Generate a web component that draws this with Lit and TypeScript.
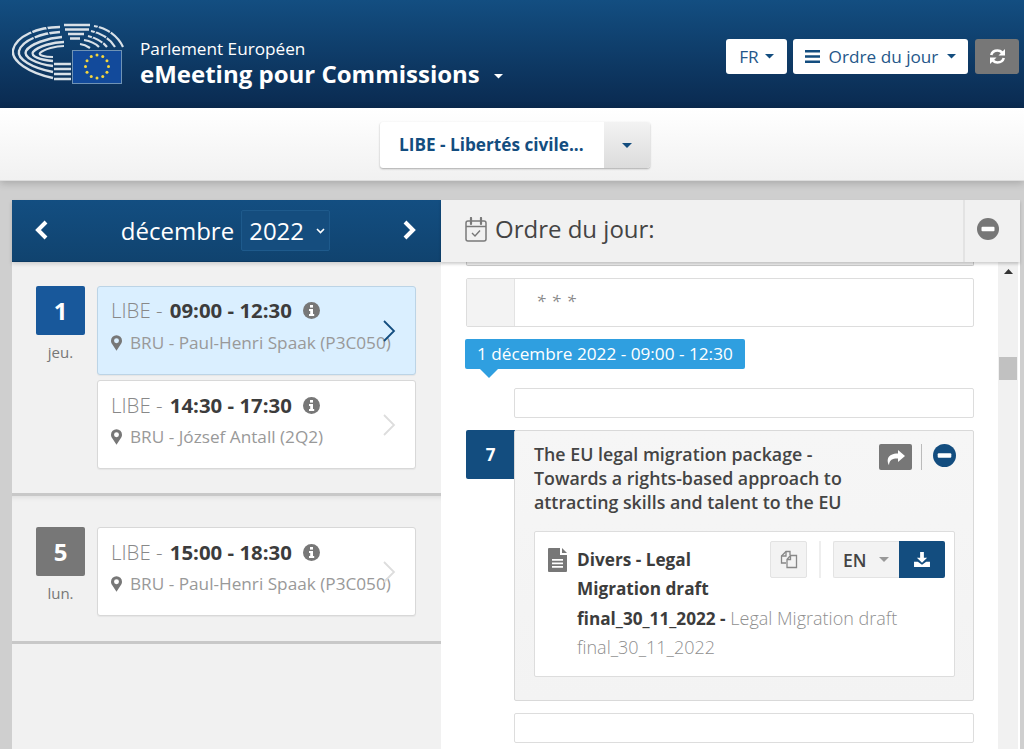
import { LitElement, html, css, svg } from "lit";
import { customElement } from "lit/decorators.js";

const caret = (c: string, w = 10) => html`<svg width=${w} height=${w / 2} viewBox="0 0 10 5"><path d="M0 0h10L5 5z" fill=${c}/></svg>`;
const info = html`<svg width="17" height="17" viewBox="0 0 17 17"><circle cx="8.5" cy="8.5" r="8.5" fill="#777"/><rect x="7" y="3" width="3" height="2.6" fill="#fff"/><path d="M6 7h4v5h1.2v2H6v-2h1.2V9H6z" fill="#fff"/></svg>`;
const pin = html`<svg width="11" height="16" viewBox="0 0 12 17"><path fill-rule="evenodd" d="M6 0a6 6 0 0 0-6 6c0 1.6.5 2.4 1 3.4L6 17l5-7.6c.5-1 1-1.8 1-3.4a6 6 0 0 0-6-6zm0 8.7a2.7 2.7 0 1 1 0-5.4 2.7 2.7 0 0 1 0 5.4z" fill="#777"/></svg>`;
const chev = (c: string) => html`<svg class="chev" width="14" height="22" viewBox="0 0 14 22"><path d="M2 1l10 10L2 21" fill="none" stroke=${c} stroke-width="1.8"/></svg>`;
const bold = (d: string) => html`<svg class="arrow" width="15" height="20" viewBox="0 0 15 20"><path d=${d} fill="none" stroke="#fff" stroke-width="4"/></svg>`;
const minus = (c: string, s: number) => html`<svg width=${s} height=${s} viewBox="0 0 22 22"><circle cx="11" cy="11" r="11" fill=${c}/><rect x="4.5" y="8.8" width="13" height="4.4" rx="1" fill="#fff"/></svg>`;

const stars = [0,1,2,3,4,5,6,7,8,9,10,11].map((i) => {
  const a = (i * Math.PI) / 6;
  return svg`<circle cx=${25 + 11.5 * Math.sin(a)} cy=${16.5 - 11.5 * Math.cos(a)} r="1.5" fill="#f5d63d"/>`;
});

const logo = html`<svg width="112" height="64" viewBox="0 0 112 64">
  <g fill="none" stroke="#d9e1e8" stroke-linecap="butt">
    <path d="M48 5C26 5 4 14 1 28c-2 11 16 23 40 28" stroke-width="2.4"/>
    <path d="M48 10C30 11 10 18 7 29c-2 8 13 17 34 21" stroke-width="2.4"/>
    <path d="M50 15C36 16 18 22 14 29c-3 6 10 13 27 15" stroke-width="2.4"/>
    <path d="M52 20C42 20 26 24 21 30c-3 4 7 8 20 9" stroke-width="2.4"/>
    <path d="M52 24C44 24 32 27 28 31c-2 2 4 4 13 4" stroke-width="2"/>
    <path d="M52 3h26M53 7.500h24M56 12h16M58 16.500h10" stroke-width="2.400"/>
    <path d="M82 4c13 2 24 10 29 21M79 9c10 2 19 8 24 16M76 14c8 2 15 6 19 11M72 18c6 1 12 4 15 7M68 22c4 .5 7 2 10 4" stroke-width="2.200"/>
    <path d="M42 42h17M42 47h17M42 52h17M42 57h17" stroke-width="2.600"/>
    <path d="M18 6l6 14M34 3l4 12M88 2l-8 14M100 8l-10 14" stroke="#0f3f6e" stroke-width="1.200"/>
  </g>
  <g transform="translate(60 28)">
    <rect x=".5" y=".5" width="49" height="33" fill="#124a9b" stroke="#6f93b5"/>
    ${stars}
  </g>
</svg>`;

@customElement("app-root")
export class AppRoot extends LitElement {
  static styles = css`
    :host { display: block; height: 749px; overflow: hidden; background: #cfcfcf; font-family: "Open Sans", sans-serif; color: #444; }
    * { box-sizing: border-box; }
    .top { height: 108px; display: flex; background: linear-gradient(#134e81, #0a2a50); padding: 22px 5px 0 12px; }
    .brand { display: flex; flex: 1; }
    .brand-text { margin: 15px 0 0 16px; color: #fff; }
    .brand-1 { font-size: 17.200px; line-height: 23px; }
    .brand-2 { font-size: 24px; line-height: 28px; font-weight: 700; display: flex; align-items: center; gap: 14px; }
    .brand-2 svg { margin-top: 5px; }
    .tools { display: flex; gap: 6px; height: 35px; margin-top: 17px; }
    .tool { background: #fff; border-radius: 3px; color: #25578a; font-size: 17.200px; display: flex; align-items: center; justify-content: center; gap: 6px; }
    .fr { width: 61px; }
    .menu { width: 175px; gap: 9px; }
    .sync { width: 44px; background: #777; margin-left: 1px; }
    .sub { height: 73px; background: linear-gradient(#fff, #f1f1f1); border-bottom: 1px solid #ddd; box-shadow: 0 2px 8px rgba(0,0,0,.2); display: flex; justify-content: center; padding-top: 14px; position: relative; }
    .pick { width: 270px; height: 46px; display: flex; border-radius: 3px; background: #fff; box-shadow: 0 1px 2px rgba(0,0,0,.3); margin-left: 6px; }
    .pick-t { flex: 1; font-size: 17.200px; font-weight: 700; color: #134d7f; padding: 0 0 0 19px; line-height: 46px; white-space: nowrap; }
    .pick-c { width: 46px; background: linear-gradient(#f3f3f3, #dcdcdc); display: flex; align-items: center; justify-content: center; border-radius: 0 3px 3px 0; }
    .main { display: flex; margin: 19px 4px 0 12px; height: 549px; }
    .left { width: 429px; background: #f1f1f1; }
    .lhead { height: 62px; background: linear-gradient(#134e81, #10436f); border-bottom: 1px solid #0c3a62; box-shadow: 0 2px 4px rgba(0,0,0,.15); color: #fff; display: flex; align-items: center; padding: 0 24px 0 22px; position: relative; }
    .arrow { margin-top: -2px; }
    .month { flex: 1; display: flex; align-items: center; justify-content: center; font-size: 24px; gap: 7px; }
    .year { width: 89px; height: 41px; border: 1px solid #1e5a8c; border-radius: 2px; background: #154d7e; display: flex; align-items: center; gap: 12px; padding-left: 7px; }
    .group { border-bottom: 3px solid #c8c8c8; padding: 24px 25px 0 24px; display: flex; gap: 12px; }
    .g1 { height: 234px; }
    .g2 { height: 148px; padding-top: 31px; box-shadow: inset 0 6px 6px -6px rgba(0,0,0,.12); }
    .day { width: 49px; text-align: center; color: #777; font-size: 15px; }
    .num { height: 49px; border-radius: 2px; color: #fff; font-size: 24px; font-weight: 700; display: flex; align-items: center; justify-content: center; margin-bottom: 7px; }
    .blue { background: #18589b; }
    .gray { background: #777; }
    .sess { flex: 1; display: flex; flex-direction: column; gap: 5px; }
    .card { height: 89px; background: #fff; border: 1px solid #d8d8d8; border-radius: 3px; padding: 9px 0 0 13px; position: relative; white-space: nowrap; box-shadow: 0 1px 1px rgba(0,0,0,.05); }
    .card.on { background: #daefff; border-color: #bcd4e6; padding-top: 8px; }
    .l1 { font-size: 20.400px; line-height: 30px; color: #888; display: flex; align-items: center; font-weight: 300; white-space: pre; }
    .l1 b { font-weight: 700; color: #3c3c3c; margin: 0 11px 0 2px; }
    .l2 { font-size: 17.200px; line-height: 24px; margin-top: 5px; color: #999; display: flex; align-items: center; gap: 8px; }
    .on .l2 { margin-top: 6px; }
    .chev { position: absolute; right: 19px; top: 33px; }
    .right { flex: 1; background: #fff; display: flex; flex-direction: column; }
    .rhead { height: 62px; background: #f1f1f1; display: flex; align-items: center; font-size: 24px; color: #444; box-shadow: 0 2px 3px rgba(0,0,0,.2); position: relative; }
    .rtitle { flex: 1; display: flex; align-items: center; gap: 8px; padding-left: 24px; line-height: 58px; height: 100%; padding-bottom: 4px; }
    .coll { width: 57px; height: 100%; border-left: 2px solid #e3e3e3; display: flex; align-items: center; justify-content: center; padding: 0 10px 4px 0; }
    .rbody { flex: 1; display: flex; overflow: hidden; }
    .list { flex: 1; padding: 0 24px 0 25px; }
    .clip { height: 4px; border: 1px solid #ccc; border-top: 0; border-radius: 0 0 2px 2px; background: #f1f1f1; margin-bottom: 12px; }
    .row { display: flex; height: 49px; border: 1px solid #ddd; border-radius: 2px; background: #fff; }
    .row-n { width: 48px; background: #f3f3f3; border-right: 1px solid #e3e3e3; }
    .row-t { padding: 10px 0 0 21px; color: #888; font-style: italic; font-size: 17.200px; letter-spacing: .6px; }
    .tag { display: inline-block; margin: 12px 0 0 -1px; height: 30px; background: #2f9fe0; border-radius: 2px; color: #fff; font-size: 17.200px; line-height: 30px; padding: 0 12px; position: relative; }
    .tag::after { content: ""; position: absolute; left: 15px; top: 30px; border: 9px solid transparent; border-top-color: #2f9fe0; border-bottom: 0; }
    .blank { height: 30px; border: 1px solid #ddd; border-radius: 2px; margin: 19px 0 0 48px; background: #fff; }
    .blank.after { margin-top: 12px; }
    .item { display: flex; margin-top: 12px; }
    .inum { width: 49px; height: 49px; background: #134d7f; color: #fff; font-weight: 700; font-size: 17px; border-radius: 2px 0 0 2px; display: flex; align-items: center; justify-content: center; margin-right: -1px; }
    .ibody { flex: 1; height: 271px; background: linear-gradient(#f6f6f6, #f3f3f3); border: 1px solid #d9d9d9; border-radius: 2px; padding: 11px 18px 0 19px; }
    .ititle-row { display: flex; height: 89px; justify-content: space-between; }
    .ititle { width: 330px; font-size: 17.800px; font-weight: 600; line-height: 24px; color: #444; }
    .iact { display: flex; align-items: flex-start; padding-top: 2px; margin-right: -1px; }
    .share { width: 33px; height: 26px; background: #777; border-radius: 2px; display: flex; align-items: center; justify-content: center; }
    .sep { width: 1px; height: 26px; background: #bbb; margin: 0 11px 0 9px; }
    .doc { height: 146px; background: #fff; border: 1px solid #ddd; border-radius: 2px; padding: 9px 9px 0 13px; display: flex; }
    .dicon { width: 29px; flex: none; padding-top: 7px; }
    .dtext { flex: 1; font-size: 18px; line-height: 29.300px; color: #8f8f8f; font-weight: 300; margin-top: 4px; margin-right: -200px; position: relative; }
    .dtext b { font-weight: 700; color: #3c3c3c; font-size: 17.200px; }
    .dname { width: 170px; font-weight: 700; color: #3c3c3c; font-size: 17.200px; }
    .dacts { display: flex; height: 37px; position: relative; }
    .copy { width: 37px; background: #f3f3f3; border: 1px solid #e3e3e3; border-radius: 2px; display: flex; align-items: center; justify-content: center; }
    .dsep { width: 2px; background: #eee; margin: 0 12px; }
    .lang { width: 66px; background: #f3f3f3; border: 1px solid #e3e3e3; border-right: 0; border-radius: 2px 0 0 2px; font-size: 17.500px; font-weight: 600; color: #444; display: flex; align-items: center; gap: 13px; padding-left: 9px; }
    .dl { width: 46px; background: #134d7f; border-radius: 0 2px 2px 0; display: flex; align-items: center; justify-content: center; }
    .bar { width: 22px; background: #f1f1f1; display: flex; flex-direction: column; align-items: center; padding-right: 2px; background-clip: content-box; }
    .bar svg { margin-top: 7px; }
    .thumb { width: 18px; height: 23px; background: #c1c1c1; margin-top: 83px; }
  `;

  private session(time: string, room: string, on: boolean) {
    return html`<div class="card ${on ? "on" : ""}">
      <div class="l1">LIBE - <b>${time}</b>${info}</div>
      <div class="l2">${pin}<span>${room}</span></div>
      ${chev(on ? "#134d7f" : "#ddd")}
    </div>`;
  }

  render() {
    return html`
      <div class="top">
        <div class="brand">
          ${logo}
          <div class="brand-text">
            <div class="brand-1">Parlement Européen</div>
            <div class="brand-2">eMeeting pour Commissions ${caret("#fff", 9)}</div>
          </div>
        </div>
        <div class="tools">
          <div class="tool fr">FR ${caret("#134d7f", 9)}</div>
          <div class="tool menu">
            <svg width="15" height="13" viewBox="0 0 15 13"><path d="M0 0h15v2.6H0zM0 5.2h15v2.6H0zM0 10.4h15V13H0z" fill="#134d7f"/></svg>
            Ordre du jour ${caret("#134d7f", 9)}
          </div>
          <div class="tool sync">
            <svg width="17" height="17" viewBox="0 0 17 17" fill="none"><path d="M2.2 7C3 4.300 5.300 2.500 8.500 2.500c2 0 3.500.8 4.700 2" stroke="#fff" stroke-width="2.600"/><path d="M16 1v6.500H9.500z" fill="#fff"/><path d="M14.800 10c-.8 2.700-3.100 4.500-6.300 4.500-2 0-3.500-.8-4.700-2" stroke="#fff" stroke-width="2.600"/><path d="M1 16V9.500h6.500z" fill="#fff"/></svg>
          </div>
        </div>
      </div>
      <div class="sub">
        <div class="pick">
          <div class="pick-t">LIBE - Libertés civile...</div>
          <div class="pick-c">${caret("#134d7f", 10)}</div>
        </div>
      </div>
      <div class="main">
        <div class="left">
          <div class="lhead">
            ${bold("M12 2L4 10l8 8")}
            <div class="month">décembre
              <div class="year">2022 <svg width="9" height="6" viewBox="0 0 9 6"><path d="M1 1l3.500 3.500L8 1" fill="none" stroke="#fff" stroke-width="1.600"/></svg></div>
            </div>
            ${bold("M3 2l8 8-8 8")}
          </div>
          <div class="group g1">
            <div class="day"><div class="num blue">1</div>jeu.</div>
            <div class="sess">
              ${this.session("09:00 - 12:30", "BRU - Paul-Henri Spaak (P3C050)", true)}
              ${this.session("14:30 - 17:30", "BRU - József Antall (2Q2)", false)}
            </div>
          </div>
          <div class="group g2">
            <div class="day"><div class="num gray">5</div>lun.</div>
            <div class="sess">${this.session("15:00 - 18:30", "BRU - Paul-Henri Spaak (P3C050)", false)}</div>
          </div>
        </div>
        <div class="right">
          <div class="rhead">
            <div class="rtitle">
              <svg width="22" height="25" viewBox="0 0 22 25" fill="none"><rect x="1" y="4" width="20" height="20" rx="2" stroke="#7a7a7a" stroke-width="1.500" fill="#f1f1f1"/><path d="M1 9.500h20" stroke="#7a7a7a" stroke-width="1.500"/><path d="M6 1v6M16 1v6" stroke="#7a7a7a" stroke-width="2.200" stroke-linecap="round"/><path d="M7 16l3 3 5-5.500" stroke="#777" stroke-width="1.400"/></svg>
              Ordre du jour:
            </div>
            <div class="coll">${minus("#777", 22)}</div>
          </div>
          <div class="rbody">
            <div class="list">
              <div class="clip"></div>
              <div class="row"><div class="row-n"></div><div class="row-t">* * *</div></div>
              <div class="tag">1 décembre 2022 - 09:00 - 12:30</div>
              <div class="blank"></div>
              <div class="item">
                <div class="inum">7</div>
                <div class="ibody">
                  <div class="ititle-row">
                    <div class="ititle">The EU legal migration package - Towards a rights-based approach to attracting skills and talent to the EU</div>
                    <div class="iact">
                      <div class="share"><svg width="19" height="15" viewBox="0 0 19 15"><path d="M12 0l7 6-7 6V8.500C7 8.300 3.500 9.500 3 15 .5 10.500 1 3.500 12 3.500z" fill="#fff"/></svg></div>
                      <div class="sep"></div>
                      ${minus("#134d7f", 23)}
                    </div>
                  </div>
                  <div class="doc">
                    <div class="dicon">
                      <svg width="20" height="24" viewBox="0 0 20 24"><path fill-rule="evenodd" d="M1 0h11v7h7v16a1 1 0 0 1-1 1H1a1 1 0 0 1-1-1V1a1 1 0 0 1 1-1zM4 11v1.700h11V11zM4 14.500v1.700h11v-1.700zM4 18v1.700h11V18z" fill="#777"/><path d="M14 0l5 5h-5z" fill="#777"/></svg>
                    </div>
                    <div class="dtext">
                      <div class="dname">Divers - Legal Migration draft</div>
                      <b>final_30_11_2022 -</b> Legal Migration draft<br/>final_30_11_2022
                    </div>
                    <div class="dacts">
                      <div class="copy"><svg width="18" height="19" viewBox="0 0 18 19" fill="none" stroke="#888" stroke-width="1.300"><path d="M6 13H1.500V6L6 1.500h4V5"/><path d="M1.500 6H6V1.500"/><path d="M7 9.500L10.500 5.500H16.500V17.500H7z"/><path d="M7 9.500h3.500v-4"/></svg></div>
                      <div class="dsep"></div>
                      <div class="lang">EN ${caret("#999", 10)}</div>
                      <div class="dl"><svg width="16" height="15" viewBox="0 0 17 16"><path d="M6.500 0h4v6h3.500l-5.500 5.500L3 6h3.500z" fill="#fff"/><path d="M0 10.500h4l4.500 3 4.500-3h4V16H0z" fill="#fff"/></svg></div>
                    </div>
                  </div>
                </div>
              </div>
              <div class="blank after"></div>
            </div>
            <div class="bar">
              <svg width="9" height="5" viewBox="0 0 9 5"><path d="M0 5h9L4.500 0z" fill="#333"/></svg>
              <div class="thumb"></div>
            </div>
          </div>
        </div>
      </div>
    `;
  }
}
